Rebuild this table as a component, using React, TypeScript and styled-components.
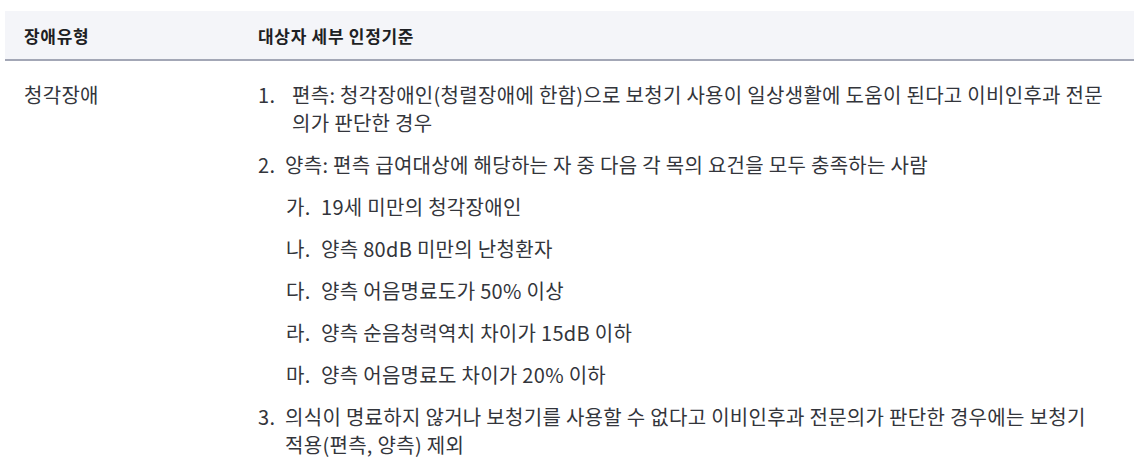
import React from "react";
import styled, { createGlobalStyle } from "styled-components";

const Global = createGlobalStyle`
  html, body { margin: 0; padding: 0; background: #ffffff; }
  body {
    font-family: "Noto Sans CJK KR", "Noto Sans", sans-serif;
    -webkit-font-smoothing: antialiased;
  }
`;

const Page = styled.div`
  padding: 11px 0 0 5px;
  width: 1134px;
  box-sizing: border-box;
`;

const Table = styled.div`
  width: 1129px;
  display: grid;
  grid-template-columns: 234px 1fr;
`;

const HeadCell = styled.div`
  background: #f4f5f9;
  border-bottom: 2px solid #a3a7b6;
  height: 50px;
  box-sizing: border-box;
  padding: 0 19px;
  display: flex;
  align-items: center;
  font-size: 17px;
  font-weight: 700;
  letter-spacing: 0.7px;
  color: #1e1f24;
`;

const BodyCell = styled.div`
  padding: 20px 30px 10px 19px;
  font-size: 20px;
  line-height: 28px;
  color: #33353b;
  letter-spacing: 0.3px;
`;

const List = styled.ol`
  list-style: none;
  margin: 0;
  padding: 0;
  display: flex;
  flex-direction: column;
  gap: 14px;
`;

const Item = styled.li<{ $mark: number }>`
  display: grid;
  grid-template-columns: ${(p) => p.$mark}px 1fr;
`;

const Marker = styled.span``;

const Line = styled.span<{ $keep?: boolean }>`
  word-break: ${(p) => (p.$keep ? "keep-all" : "normal")};
`;

const Text = styled.div`
  display: flex;
  flex-direction: column;
  gap: 14px;
`;

const SubList = styled.ol`
  list-style: none;
  margin: 0;
  padding: 0 0 0 1px;
  display: flex;
  flex-direction: column;
  gap: 14px;
`;

const subs = [
  ["가.", "19세 미만의 청각장애인"],
  ["나.", "양측 80dB 미만의 난청환자"],
  ["다.", "양측 어음명료도가 50% 이상"],
  ["라.", "양측 순음청력역치 차이가 15dB 이하"],
  ["마.", "양측 어음명료도 차이가 20% 이하"],
];

export default function App() {
  return (
    <>
      <Global />
      <Page>
        <Table>
          <HeadCell>장애유형</HeadCell>
          <HeadCell>대상자 세부 인정기준</HeadCell>
          <BodyCell>청각장애</BodyCell>
          <BodyCell>
            <List>
              <Item $mark={34}>
                <Marker>1.</Marker>
                <Line>
                  편측: 청각장애인(청렬장애에 한함)으로 보청기 사용이 일상생활에 도움이 된다고 이비인후과 전문의가 판단한 경우
                </Line>
              </Item>
              <Item $mark={27}>
                <Marker>2.</Marker>
                <Text>
                  <Line>양측: 편측 급여대상에 해당하는 자 중 다음 각 목의 요건을 모두 충족하는 사람</Line>
                  <SubList>
                    {subs.map(([m, t]) => (
                      <Item key={m} $mark={35}>
                        <Marker>{m}</Marker>
                        <Line>{t}</Line>
                      </Item>
                    ))}
                  </SubList>
                </Text>
              </Item>
              <Item $mark={27}>
                <Marker>3.</Marker>
                <Line $keep>
                  의식이 명료하지 않거나 보청기를 사용할 수 없다고 이비인후과 전문의가 판단한 경우에는 보청기 적용(편측, 양측) 제외
                </Line>
              </Item>
            </List>
          </BodyCell>
        </Table>
      </Page>
    </>
  );
}
